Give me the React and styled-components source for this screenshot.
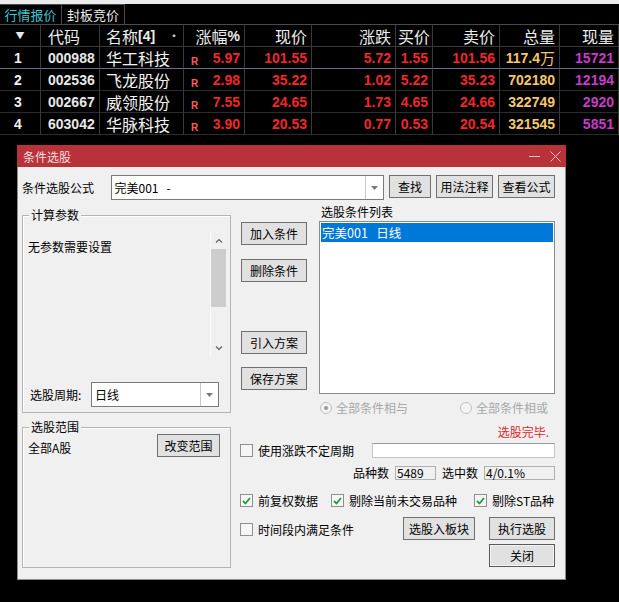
import styled, { createGlobalStyle } from 'styled-components';

const GlobalStyle = createGlobalStyle`
  body {
    margin: 0;
    background: #000;
    font-family: "Noto Sans CJK SC", "Liberation Sans", sans-serif;
  }
  * { box-sizing: border-box; }
`;

const cols = [
  { key: 'idx', align: 'center' },
  { key: 'code', align: 'left' },
  { key: 'name', align: 'left' },
  { key: 'pct', align: 'right' },
  { key: 'price', align: 'right' },
  { key: 'chg', align: 'right' },
  { key: 'bid', align: 'right' },
  { key: 'ask', align: 'right' },
  { key: 'vol', align: 'right' },
  { key: 'cur', align: 'right' },
];

const rows = [
  ['1', '000988', '华工科技', '5.97', '101.55', '5.72', '1.55', '101.56', '117.4万', '15721'],
  ['2', '002536', '飞龙股份', '2.98', '35.22', '1.02', '5.22', '35.23', '702180', '12194'],
  ['3', '002667', '威领股份', '7.55', '24.65', '1.73', '4.65', '24.66', '322749', '2920'],
  ['4', '603042', '华脉科技', '3.90', '20.53', '0.77', '0.53', '20.54', '321545', '5851'],
];

const colColor = {
  idx: '#f0f0f0',
  code: '#e8e8e8',
  name: '#f2f2f2',
  pct: '#f02828',
  price: '#f02828',
  chg: '#f02828',
  bid: '#f02828',
  ask: '#f02828',
  vol: '#f5c86a',
  cur: '#c83cc8',
};

const ArrowDown = () => (
  <svg width="7" height="4" viewBox="0 0 7 4">
    <path d="M0 0 L7 0 L3.5 4 Z" fill="#7a7a7a" />
  </svg>
);

const Chevron = ({ up }) => (
  <svg width="8" height="5" viewBox="0 0 8 5">
    <path d={up ? 'M1 4.5 L4 1.5 L7 4.5' : 'M1 0.5 L4 3.5 L7 0.5'} fill="none" stroke="#606060" strokeWidth="1.2" />
  </svg>
);

const Check = () => (
  <svg width="9" height="8" viewBox="0 0 9 8">
    <path d="M1 4 L3.5 6.5 L8 1" fill="none" stroke="#1f9d3a" strokeWidth="1.8" />
  </svg>
);

const App = () => {
  return (
    <Page>
      <GlobalStyle />
      <TopStrip />
      <TabBar>
        <Tab $active>行情报价</Tab>
        <Tab>封板竞价</Tab>
      </TabBar>
      <Table>
        <HeadCell $align="center"><HeadArrow>▼</HeadArrow></HeadCell>
        <HeadCell $align="left" $pad={7}>代码</HeadCell>
        <HeadCell $align="left" $pad={6}>
          名称<Bold>[4]</Bold>
          <Dot>•</Dot>
        </HeadCell>
        <HeadCell $align="right">涨幅<Bold>%</Bold></HeadCell>
        <HeadCell $align="right">现价</HeadCell>
        <HeadCell $align="right">涨跌</HeadCell>
        <HeadCell $align="right" $pad={2}>买价</HeadCell>
        <HeadCell $align="right">卖价</HeadCell>
        <HeadCell $align="right">总量</HeadCell>
        <HeadCell $align="right">现量</HeadCell>
        {rows.map((r, ri) =>
          r.map((v, ci) => {
            const c = cols[ci];
            const selected = ri === 0;
            if (c.key === 'name') {
              return (
                <NameCell key={ri + '-' + ci} $selected={selected}>{v}</NameCell>
              );
            }
            if (c.key === 'pct') {
              return (
                <Cell key={ri + '-' + ci} $align="space-between" $color={colColor[c.key]} $selected={selected}>
                  <RMark>R</RMark>
                  <span>{v}</span>
                </Cell>
              );
            }
            if (c.key === 'vol' && v.endsWith('万')) {
              return (
                <Cell key={ri + '-' + ci} $align="right" $color={colColor[c.key]} $selected={selected}>
                  {v.slice(0, -1)}<Wan>万</Wan>
                </Cell>
              );
            }
            return (
              <Cell key={ri + '-' + ci} $align={c.align} $color={colColor[c.key]} $selected={selected} $pad={c.key === 'code' ? 7 : 4}>
                {v}
              </Cell>
            );
          })
        )}
      </Table>

      <Dialog>
        <TitleBar>
          <span>条件选股</span>
          <TitleIcons>
            <svg width="11" height="11" viewBox="0 0 11 11">
              <path d="M0 5.5 H11" stroke="#f3c4c6" strokeWidth="1" />
            </svg>
            <svg width="11" height="11" viewBox="0 0 11 11">
              <path d="M0.5 0.5 L10.5 10.5 M10.5 0.5 L0.5 10.5" stroke="#f3c4c6" strokeWidth="1" />
            </svg>
          </TitleIcons>
        </TitleBar>
        <Body>
          <FormulaRow>
            <FormulaLabel>条件选股公式</FormulaLabel>
            <Combo $width={275} $height={25}>
              <ComboText>完美001&nbsp;&nbsp;&nbsp;-</ComboText>
              <ComboArrow><ArrowDown /></ComboArrow>
            </Combo>
            <Button $width={42} $ml={5}>查找</Button>
            <Button $width={57} $ml={5}>用法注释</Button>
            <Button $width={57} $ml={5}>查看公式</Button>
          </FormulaRow>

          <Main>
            <LeftCol>
              <GroupBox $height={198} $mt={15}>
                <Legend>计算参数</Legend>
                <ParamsArea>
                  <ParamsText>无参数需要设置</ParamsText>
                  <ScrollBar>
                    <ScrollArrow><Chevron up /></ScrollArrow>
                    <ScrollThumb />
                    <ScrollSpace />
                    <ScrollArrow><Chevron /></ScrollArrow>
                  </ScrollBar>
                </ParamsArea>
                <PeriodRow>
                  <PeriodLabel>选股周期:</PeriodLabel>
                  <Combo $width={128} $height={25}>
                    <ComboText>日线</ComboText>
                    <ComboArrow><ArrowDown /></ComboArrow>
                  </Combo>
                </PeriodRow>
              </GroupBox>
              <GroupBox $height={141} $mt={14}>
                <Legend>选股范围</Legend>
                <RangeRow>
                  <RangeText>全部A股</RangeText>
                  <Button $width={63}>改变范围</Button>
                </RangeRow>
              </GroupBox>
            </LeftCol>

            <RightArea>
              <TopSection>
                <ButtonCol>
                  <Button $width={66}>加入条件</Button>
                  <Button $width={66} $mt={14}>删除条件</Button>
                  <Button $width={66} $mt={49}>引入方案</Button>
                  <Button $width={66} $mt={13}>保存方案</Button>
                </ButtonCol>
                <ListCol>
                  <ListLabel>选股条件列表</ListLabel>
                  <ListBox>
                    <ListItem>完美001&nbsp;&nbsp;&nbsp;日线</ListItem>
                  </ListBox>
                </ListCol>
              </TopSection>

              <RadioRow>
                <RadioItem $ml={80}>
                  <Radio $checked />
                  全部条件相与
                </RadioItem>
                <RadioItem $ml={52}>
                  <Radio />
                  全部条件相或
                </RadioItem>
              </RadioRow>

              <Status>选股完毕.</Status>

              <PeriodOptRow>
                <CheckItem>
                  <CheckBox />
                  使用涨跌不定周期
                </CheckItem>
                <TextInput />
              </PeriodOptRow>

              <StatsRow>
                <StatLabel>品种数</StatLabel>
                <StatBox $width={41}>5489</StatBox>
                <StatLabel>选中数</StatLabel>
                <StatBox $width={71}>4/0.1%</StatBox>
              </StatsRow>

              <ChecksRow>
                <CheckItem>
                  <CheckBox><Check /></CheckBox>
                  前复权数据
                </CheckItem>
                <CheckItem $ml={13}>
                  <CheckBox><Check /></CheckBox>
                  剔除当前未交易品种
                </CheckItem>
                <CheckItem $ml={17}>
                  <CheckBox><Check /></CheckBox>
                  剔除ST品种
                </CheckItem>
              </ChecksRow>

              <BottomRow>
                <CheckItem $mt={6}>
                  <CheckBox />
                  时间段内满足条件
                </CheckItem>
                <BottomButtons>
                  <ButtonLine>
                    <Button $width={72}>选股入板块</Button>
                    <Button $width={66} $ml={14}>执行选股</Button>
                  </ButtonLine>
                  <ButtonLine>
                    <Button $width={66} $mt={4} $default>关闭</Button>
                  </ButtonLine>
                </BottomButtons>
              </BottomRow>
            </RightArea>
          </Main>
        </Body>
      </Dialog>
    </Page>
  );
};

export default App;

const Page = styled.div`
  width: 619px;
  height: 602px;
  background: #000;
  overflow: hidden;
`;

const TopStrip = styled.div`
  height: 4px;
  background: #ececec;
`;

const TabBar = styled.div`
  display: flex;
  height: 21px;
  border-bottom: 1px solid #4a4a4a;
`;

const Tab = styled.div`
  width: ${(p) => (p.$active ? 62 : 63)}px;
  border-right: 1px solid #4a4a4a;
  border-top: 1px solid #4a4a4a;
  font-size: 13px;
  line-height: 19px;
  text-align: center;
  color: ${(p) => (p.$active ? '#3cc8d0' : '#ececec')};
`;

const Table = styled.div`
  display: grid;
  grid-template-columns: 41px 59px 84px 61px 67px 84px 37px 67px 60px 59px;
  grid-auto-rows: 22px;
`;

const BaseCell = styled.div`
  display: flex;
  align-items: center;
  border-right: 1px solid #3a3a3a;
  border-bottom: 1px solid ${(p) => (p.$selected ? '#6a6c8a' : '#2c2c2c')};
  white-space: nowrap;
  overflow: hidden;
`;

const HeadCell = styled(BaseCell)`
  position: relative;
  justify-content: ${(p) => (p.$align === 'left' ? 'flex-start' : p.$align === 'center' ? 'center' : 'flex-end')};
  padding: 0 ${(p) => (p.$align === 'right' ? p.$pad ?? 4 : 0)}px 0 ${(p) => (p.$align === 'left' ? p.$pad ?? 4 : 0)}px;
  font-size: 16px;
  line-height: 20px;
  color: #ececec;
  border-bottom-color: #3a3a3a;
`;

const HeadArrow = styled.span`
  font-size: 9px;
  color: #e8e8e8;
`;

const Bold = styled.span`
  font-family: "Liberation Sans", sans-serif;
  font-weight: bold;
  font-size: 14px;
`;

const Dot = styled.span`
  position: absolute;
  right: 3px;
  top: 1px;
  font-size: 12px;
  color: #d8d8d8;
`;

const Cell = styled(BaseCell)`
  justify-content: ${(p) =>
    p.$align === 'left' ? 'flex-start' : p.$align === 'center' ? 'center' : p.$align === 'space-between' ? 'space-between' : 'flex-end'};
  padding: 0 ${(p) => (p.$align === 'left' ? 0 : p.$pad ?? 4)}px 0 ${(p) => (p.$align === 'left' ? p.$pad ?? 4 : p.$align === 'space-between' ? 7 : 0)}px;
  font-family: "Liberation Sans", sans-serif;
  font-weight: bold;
  font-size: 14px;
  color: ${(p) => p.$color};
`;

const NameCell = styled(BaseCell)`
  padding-left: 6px;
  font-size: 16px;
  line-height: 20px;
  color: #f2f2f2;
`;

const RMark = styled.span`
  align-self: flex-end;
  margin-bottom: 1px;
  font-size: 10px;
  color: #ff5a5a;
`;

const Wan = styled.span`
  font-family: "Noto Sans CJK SC", sans-serif;
  font-weight: normal;
  font-size: 15px;
`;

const Dialog = styled.div`
  width: 549px;
  height: 435px;
  margin: 10px 0 0 17px;
  background: #f0f0f0;
  border: 1px solid #8c8c8c;
  border-top: none;
  font-size: 12px;
  color: #000;
`;

const TitleBar = styled.div`
  height: 22px;
  margin: 0 -1px;
  padding: 0 5px 0 6px;
  display: flex;
  align-items: center;
  justify-content: space-between;
  background: #b83339;
  color: #f8dede;
  font-size: 12px;
`;

const TitleIcons = styled.div`
  display: flex;
  gap: 10px;
  align-items: center;
`;

const Body = styled.div`
  padding: 8px 10px 0 4px;
`;

const FormulaRow = styled.div`
  display: flex;
  align-items: flex-start;
  height: 25px;
`;

const FormulaLabel = styled.div`
  width: 89px;
  line-height: 25px;
`;

const Combo = styled.div`
  width: ${(p) => p.$width}px;
  height: ${(p) => p.$height}px;
  display: flex;
  background: #fff;
  border: 1px solid #7a7a7a;
`;

const ComboText = styled.div`
  flex: 1;
  padding-left: 3px;
  line-height: 23px;
  white-space: nowrap;
`;

const ComboArrow = styled.div`
  width: 18px;
  display: flex;
  align-items: center;
  justify-content: center;
  border-left: 1px solid #c8c8c8;
`;

const Button = styled.div`
  width: ${(p) => p.$width}px;
  height: 23px;
  margin-left: ${(p) => p.$ml || 0}px;
  margin-top: ${(p) => p.$mt || 0}px;
  flex-shrink: 0;
  display: flex;
  align-items: center;
  justify-content: center;
  background: #e1e1e1;
  border: 1px solid ${(p) => (p.$default ? '#5a5a5a' : '#707070')};
  box-shadow: ${(p) => (p.$default ? 'inset 0 0 0 1px #f4f4f4' : 'none')};
  white-space: nowrap;
`;

const Main = styled.div`
  display: flex;
`;

const LeftCol = styled.div`
  width: 209px;
  display: flex;
  flex-direction: column;
`;

const GroupBox = styled.div`
  position: relative;
  height: ${(p) => p.$height}px;
  margin-top: ${(p) => p.$mt}px;
  border: 1px solid #b4b4b4;
  box-shadow: inset 1px 1px 0 #fff;
  padding: 0 4px 0 5px;
  display: flex;
  flex-direction: column;
`;

const Legend = styled.div`
  position: absolute;
  top: -8px;
  left: 6px;
  padding: 0 2px;
  line-height: 14px;
  background: #f0f0f0;
`;

const ParamsArea = styled.div`
  margin-top: 16px;
  height: 125px;
  display: flex;
`;

const ParamsText = styled.div`
  flex: 1;
  padding-top: 6px;
`;

const ScrollBar = styled.div`
  width: 16px;
  display: flex;
  flex-direction: column;
  border-left: 1px solid #fafafa;
`;

const ScrollArrow = styled.div`
  height: 17px;
  display: flex;
  align-items: center;
  justify-content: center;
`;

const ScrollThumb = styled.div`
  height: 58px;
  background: #cdcdcd;
`;

const ScrollSpace = styled.div`
  flex: 1;
`;

const PeriodRow = styled.div`
  margin-top: 25px;
  display: flex;
  align-items: center;
  padding-left: 2px;
`;

const PeriodLabel = styled.div`
  width: 61px;
`;

const RangeRow = styled.div`
  margin-top: 6px;
  display: flex;
  justify-content: space-between;
  padding-right: 6px;
`;

const RangeText = styled.div`
  line-height: 13px;
  margin-top: 7px;
`;

const RightArea = styled.div`
  width: 315px;
  margin-left: 9px;
  display: flex;
  flex-direction: column;
`;

const TopSection = styled.div`
  display: flex;
  height: 194px;
`;

const ButtonCol = styled.div`
  width: 66px;
  margin-left: 1px;
  padding-top: 22px;
  display: flex;
  flex-direction: column;
`;

const ListCol = styled.div`
  margin-left: 12px;
  width: 236px;
  display: flex;
  flex-direction: column;
`;

const ListLabel = styled.div`
  margin-top: 5px;
  padding-left: 2px;
  line-height: 13px;
`;

const ListBox = styled.div`
  margin-top: 3px;
  flex: 1;
  background: #fff;
  border: 1px solid #8a8a8a;
  padding: 1px;
`;

const ListItem = styled.div`
  height: 19px;
  line-height: 19px;
  padding-left: 1px;
  background: #0078d7;
  color: #fff;
  font-size: 12.5px;
`;

const RadioRow = styled.div`
  margin-top: 7px;
  display: flex;
  height: 13px;
`;

const RadioItem = styled.div`
  margin-left: ${(p) => p.$ml}px;
  display: flex;
  align-items: center;
  gap: 4px;
  color: #a8a8a8;
  line-height: 13px;
`;

const Radio = styled.div`
  width: 12px;
  height: 12px;
  border-radius: 50%;
  border: 1px solid #c0c0c0;
  background: #f4f4f4;
  display: flex;
  align-items: center;
  justify-content: center;
  &::after {
    content: '';
    width: 4px;
    height: 4px;
    border-radius: 50%;
    background: ${(p) => (p.$checked ? '#9a9a9a' : 'transparent')};
  }
`;

const Status = styled.div`
  margin-top: 11px;
  line-height: 13px;
  text-align: right;
  padding-right: 6px;
  color: #e0262a;
`;

const PeriodOptRow = styled.div`
  margin-top: 5px;
  height: 14px;
  display: flex;
  justify-content: space-between;
  align-items: center;
`;

const CheckItem = styled.div`
  display: flex;
  align-items: center;
  gap: 5px;
  margin-left: ${(p) => p.$ml || 0}px;
  margin-top: ${(p) => p.$mt || 0}px;
  height: 13px;
  line-height: 13px;
  white-space: nowrap;
`;

const CheckBox = styled.div`
  width: 13px;
  height: 13px;
  border: 1px solid #8f8f8f;
  background: #f6f6f6;
  display: flex;
  align-items: center;
  justify-content: center;
`;

const TextInput = styled.div`
  width: 183px;
  height: 15px;
  background: #fff;
  border: 1px solid #c4c4c4;
  border-top-color: #9a9a9a;
`;

const StatsRow = styled.div`
  margin-top: 9px;
  height: 14px;
  display: flex;
  justify-content: flex-end;
  align-items: center;
  gap: 6px;
`;

const StatLabel = styled.div`
  line-height: 14px;
`;

const StatBox = styled.div`
  width: ${(p) => p.$width}px;
  height: 14px;
  line-height: 12px;
  padding-left: 1px;
  border: 1px solid #b0b0b0;
  background: #f0f0f0;
`;

const ChecksRow = styled.div`
  margin-top: 14px;
  display: flex;
`;

const BottomRow = styled.div`
  margin-top: 10px;
  display: flex;
  justify-content: space-between;
  align-items: flex-start;
`;

const BottomButtons = styled.div`
  display: flex;
  flex-direction: column;
  align-items: flex-end;
`;

const ButtonLine = styled.div`
  display: flex;
`;
